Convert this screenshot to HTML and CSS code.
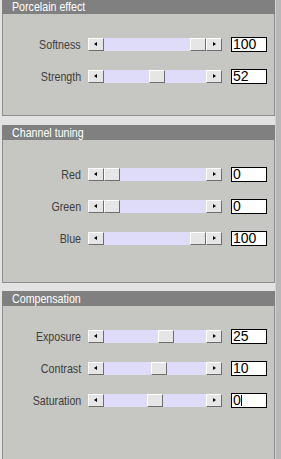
FILE: index.html
```html
<!DOCTYPE html>
<html>
<head>
<meta charset="utf-8">
<link rel="stylesheet" href="styles.css">
</head>
<body>
<div class="screen">
  <div class="column">
    <section class="panel panel-a">
      <div class="panel-header"><span class="cond">Porcelain effect</span></div>
      <div class="panel-body">
        <div class="row">
          <div class="label"><span class="cond">Softness</span></div>
          <div class="slider"><div class="btn btn-left"></div><div class="track"><div class="thumb" style="left:86px"></div></div><div class="btn btn-right"></div></div>
          <div class="value">100</div>
        </div>
        <div class="row">
          <div class="label"><span class="cond">Strength</span></div>
          <div class="slider"><div class="btn btn-left"></div><div class="track"><div class="thumb" style="left:45px"></div></div><div class="btn btn-right"></div></div>
          <div class="value">52</div>
        </div>
      </div>
    </section>
    <section class="panel panel-b">
      <div class="panel-header"><span class="cond">Channel tuning</span></div>
      <div class="panel-body">
        <div class="row">
          <div class="label"><span class="cond">Red</span></div>
          <div class="slider"><div class="btn btn-left"></div><div class="track"><div class="thumb" style="left:0px"></div></div><div class="btn btn-right"></div></div>
          <div class="value">0</div>
        </div>
        <div class="row">
          <div class="label"><span class="cond">Green</span></div>
          <div class="slider"><div class="btn btn-left"></div><div class="track"><div class="thumb" style="left:0px"></div></div><div class="btn btn-right"></div></div>
          <div class="value">0</div>
        </div>
        <div class="row">
          <div class="label"><span class="cond">Blue</span></div>
          <div class="slider"><div class="btn btn-left"></div><div class="track"><div class="thumb" style="left:86px"></div></div><div class="btn btn-right"></div></div>
          <div class="value">100</div>
        </div>
      </div>
    </section>
    <section class="panel panel-c">
      <div class="panel-header"><span class="cond">Compensation</span></div>
      <div class="panel-body">
        <div class="row">
          <div class="label"><span class="cond">Exposure</span></div>
          <div class="slider"><div class="btn btn-left"></div><div class="track"><div class="thumb" style="left:54px"></div></div><div class="btn btn-right"></div></div>
          <div class="value">25</div>
        </div>
        <div class="row">
          <div class="label"><span class="cond">Contrast</span></div>
          <div class="slider"><div class="btn btn-left"></div><div class="track"><div class="thumb" style="left:47px"></div></div><div class="btn btn-right"></div></div>
          <div class="value">10</div>
        </div>
        <div class="row">
          <div class="label"><span class="cond">Saturation</span></div>
          <div class="slider"><div class="btn btn-left"></div><div class="track"><div class="thumb" style="left:43px"></div></div><div class="btn btn-right"></div></div>
          <div class="value">0<span class="caret"></span></div>
        </div>
      </div>
    </section>
  </div>
  <div class="edge"></div>
</div>
</body>
</html>
```

FILE: styles.css
```css
html, body {
  margin: 0;
  padding: 0;
  height: 100%;
  overflow: hidden;
}
body {
  background: #e2e2e2;
  font-family: "Liberation Sans", Arial, sans-serif;
}
.screen {
  display: flex;
  height: 459px;
}
.column {
  width: 275px;
  padding-left: 2px;
  box-sizing: border-box;
  display: flex;
  flex-direction: column;
}
.edge {
  flex: 1;
  background: #b8b8b8;
  border-left: 1px solid #d0d0d0;
}
.panel {
  background: #c6c6c2;
  border: 1px solid #8e8e8e;
  border-top: none;
}
.panel-a { margin-top: 0; }
.panel-b { margin-top: 9px; }
.panel-c { margin-top: 8px; flex: 1; border-bottom: none; }
.panel-header {
  background: #808080;
  color: #fff;
  height: 15px;
  line-height: 15px;
  font-size: 13px;
  padding-left: 10px;
  white-space: nowrap;
  margin: 0 -1px;
}
.panel-a .panel-header { height: 14px; line-height: 13px; }
.cond {
  display: inline-block;
  transform: scaleX(0.82);
  transform-origin: left center;
}
.label .cond { transform-origin: right center; }
.panel-body {
  display: flex;
  flex-direction: column;
  gap: 17px;
}
.panel-a .panel-body { padding: 23px 0 31px; }
.panel-b .panel-body { padding: 27px 0 36px; }
.panel-c .panel-body { padding: 23px 0 0; }
.row {
  display: flex;
  align-items: center;
  height: 15px;
}
.label {
  width: 78px;
  text-align: right;
  font-size: 13px;
  color: #404040;
  white-space: nowrap;
}
.slider {
  display: flex;
  height: 13px;
  margin-left: 7px;
  width: 134px;
}
.btn {
  width: 16px;
  height: 13px;
  box-sizing: border-box;
  background: #e6e6e6;
  border-style: solid;
  border-width: 1px;
  border-color: #ffffff #6e6e6e #6e6e6e #ffffff;
  position: relative;
}
.btn::before {
  content: "";
  position: absolute;
  top: 3px;
  width: 0;
  height: 0;
  border-top: 2.5px solid transparent;
  border-bottom: 2.5px solid transparent;
}
.btn-left::before {
  left: 5px;
  border-right: 3px solid #000;
}
.btn-right::before {
  left: 6px;
  border-left: 3px solid #000;
}
.track {
  flex: 1;
  background: #dedcf8;
  position: relative;
}
.thumb {
  position: absolute;
  top: 0;
  width: 16px;
  height: 13px;
  box-sizing: border-box;
  background: #e6e6e6;
  border-style: solid;
  border-width: 1px;
  border-color: #ffffff #6e6e6e #6e6e6e #ffffff;
}
.value {
  margin-left: 9px;
  width: 36px;
  height: 15px;
  box-sizing: border-box;
  border: 1px solid #000;
  background: #fff;
  font-size: 14px;
  line-height: 13px;
  padding-left: 1px;
  color: #000;
  display: flex;
  align-items: center;
}
.caret {
  display: inline-block;
  width: 1px;
  height: 11px;
  background: #000;
}
```
